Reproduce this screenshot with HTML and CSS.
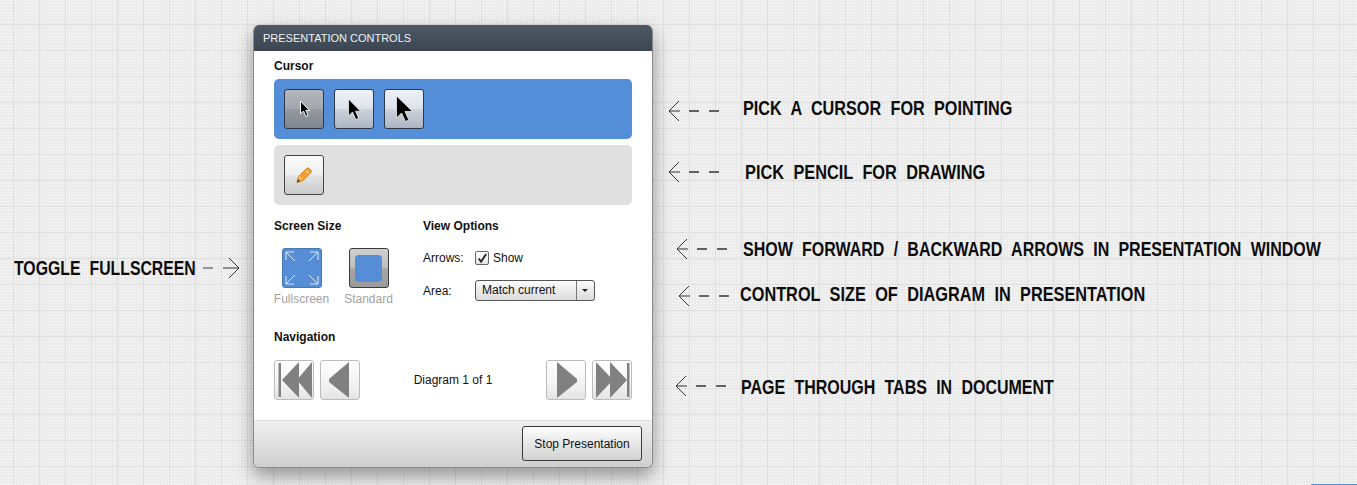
FILE: index.html
```html
<!DOCTYPE html>
<html lang="en">
<head>
<meta charset="utf-8">
<title>Presentation Controls</title>
<link rel="stylesheet" href="styles.css">
</head>
<body>
<div class="stage">
  <section class="panel">
    <header class="panel-title">PRESENTATION CONTROLS</header>
    <div class="panel-body">
      <h2 class="heading heading-cursor">Cursor</h2>
      <div class="tool-bar tool-bar-blue">
        <button class="tool tool-cursor tool-selected"><svg class="cursor-small" width="12" height="18" viewBox="0 0 12 18"><path d="M1.500 1v13l3-3 2.400 5.400 2.200-1-2.300-5H10.500z" fill="#000" stroke="#fff" stroke-width="1"/></svg></button>
        <button class="tool tool-cursor"><svg width="15" height="23" viewBox="0 0 15 23"><path d="M1.500 1v17l4-4 3.300 7.500 2.800-1.300-3.100-7H13.500z" fill="#000" stroke="#fff" stroke-width=".7"/></svg></button>
        <button class="tool tool-cursor"><svg width="19" height="28" viewBox="0 0 19 28"><path d="M1.500 1v22l5-5 4 8.500 3.300-1.500-3.800-8.500H17.500z" fill="#000" stroke="#fff" stroke-width=".7"/></svg></button>
      </div>
      <div class="tool-bar tool-bar-gray">
        <button class="tool tool-pencil"><svg width="18" height="18" viewBox="0 0 18 18"><path d="M3.500 10.500 11.500 2.500a2 2 0 0 1 2.800 0l1.500 1.500a2 2 0 0 1 0 2.800l-8 8-5.800 1.800z" fill="#f0a033" stroke="#c97a1c" stroke-width=".8"/><path d="M11 4.500 13.800 7.300M4 10.500 7 13.500" stroke="#fbd08a" stroke-width="1.300" fill="none"/><path d="M2 16.800 2.800 13l2 2z" fill="#5a3a1a"/></svg></button>
      </div>
      <div class="options">
        <div class="screen-size">
          <h2 class="heading">Screen Size</h2>
          <div class="size-row">
            <div class="size-item">
              <button class="size-btn size-full"><svg width="38" height="38" viewBox="0 0 38 38" fill="none" stroke="#dbe7f7" stroke-width="1"><path d="M3 3 12 12M3 11V3H11M35 3 26 12M27 3H35V11M3 35 12 26M3 27V35H11M35 35 26 26M35 27V35H27"/></svg></button>
              <span class="size-label">Fullscreen</span>
            </div>
            <div class="size-item">
              <button class="size-btn size-std"><span class="std-inner"></span></button>
              <span class="size-label">Standard</span>
            </div>
          </div>
        </div>
        <div class="view-options">
          <h2 class="heading">View Options</h2>
          <div class="opt-row opt-arrows">
            <span class="opt-label">Arrows:</span>
            <span class="checkbox"><svg width="13" height="13" viewBox="0 0 13 13"><path d="M3 6.500 5.500 10 11 1.500" fill="none" stroke="#222" stroke-width="2"/></svg></span>
            <span>Show</span>
          </div>
          <div class="opt-row opt-area">
            <span class="opt-label">Area:</span>
            <div class="select"><span class="select-text">Match current</span><span class="select-arrow"></span></div>
          </div>
        </div>
      </div>
      <h2 class="heading heading-nav">Navigation</h2>
      <div class="nav-row">
        <div class="nav-group">
          <button class="nav-btn"><svg width="38" height="38" viewBox="0 0 38 38" fill="#808080"><path d="M3.500 2h2.500v34H3.500zM24 1v36L7 19zM37 1v36L22 19z"/></svg></button>
          <button class="nav-btn"><svg width="38" height="38" viewBox="0 0 38 38" fill="#808080"><path d="M28 1v36L8 21v-3z"/></svg></button>
        </div>
        <div class="nav-status">Diagram 1 of 1</div>
        <div class="nav-group">
          <button class="nav-btn"><svg width="38" height="38" viewBox="0 0 38 38" fill="#808080"><path d="M10 1v36L30 21v-3z"/></svg></button>
          <button class="nav-btn"><svg width="38" height="38" viewBox="0 0 38 38" fill="#808080"><path d="M34 2h2.500v34H34zM3 1v36L20 19zM17 1v36L34 19z"/></svg></button>
        </div>
      </div>
    </div>
    <footer class="panel-footer"><button class="stop-btn">Stop Presentation</button></footer>
  </section>

  <div class="note note-1">PICK A CURSOR FOR POINTING</div>
  <div class="note note-2">PICK PENCIL FOR DRAWING</div>
  <div class="note note-3">SHOW FORWARD / BACKWARD ARROWS IN PRESENTATION WINDOW</div>
  <div class="note note-4">CONTROL SIZE OF DIAGRAM IN PRESENTATION</div>
  <div class="note note-5">PAGE THROUGH TABS IN DOCUMENT</div>
  <div class="note note-6">TOGGLE FULLSCREEN</div>

  <svg class="pointer pointer-1" width="54" height="22" viewBox="0 0 54 22" fill="none" stroke="#333"><path d="M11 1 1 11l10 10M1 11H12"/><path d="M21 11H31M41 11H51" stroke-width="1.300"/></svg>
  <svg class="pointer pointer-2" width="54" height="22" viewBox="0 0 54 22" fill="none" stroke="#333"><path d="M11 1 1 11l10 10M1 11H12"/><path d="M21 11H31M41 11H51" stroke-width="1.300"/></svg>
  <svg class="pointer pointer-3" width="54" height="22" viewBox="0 0 54 22" fill="none" stroke="#333"><path d="M11 1 1 11l10 10M1 11H12"/><path d="M21 11H31M41 11H51" stroke-width="1.300"/></svg>
  <svg class="pointer pointer-4" width="54" height="22" viewBox="0 0 54 22" fill="none" stroke="#333"><path d="M11 1 1 11l10 10M1 11H12"/><path d="M21 11H31M41 11H51" stroke-width="1.300"/></svg>
  <svg class="pointer pointer-5" width="54" height="22" viewBox="0 0 54 22" fill="none" stroke="#333"><path d="M11 1 1 11l10 10M1 11H12"/><path d="M21 11H31M41 11H51" stroke-width="1.300"/></svg>
  <svg class="pointer pointer-6" width="38" height="22" viewBox="0 0 38 22" fill="none" stroke="#333"><path d="M26 1l10 10-10 10M20 11H36"/><path d="M0 11H10" stroke="#777" stroke-width="1.500"/></svg>
  <div class="corner-strip"></div>
</div>
</body>
</html>
```
FILE: styles.css
```css
* { box-sizing: border-box; }
html, body { margin: 0; padding: 0; }
body { font-family: "Liberation Sans", Arial, sans-serif; font-size: 12px; color: #111; }
.stage {
  position: relative;
  width: 1357px;
  height: 485px;
  overflow: hidden;
  padding: 25px 0 0 253px;
  background-color: #ececec;
  background-image:
    linear-gradient(#dfdfdf 1px, transparent 1px),
    linear-gradient(90deg, #dfdfdf 1px, transparent 1px),
    conic-gradient(from 270deg at 1px 1px, #fafafa 25%, transparent 0);
  background-size: 26px 26px, 26px 26px, 3px 3px;
  background-position: 0 24px, 13px 0, 0 0;
}
.panel {
  width: 400px;
  height: 443px;
  display: flex;
  flex-direction: column;
  background: #fff;
  border: 1px solid #8a8a8a;
  border-top: 0;
  border-radius: 6px;
  overflow: hidden;
  box-shadow: 0 8px 18px rgba(0,0,0,.38);
}
.panel-title {
  height: 26px;
  line-height: 26px;
  padding-left: 9px;
  font-size: 11px;
  color: #eef0f2;
  background: linear-gradient(#4d5865, #3c4653);
  flex: none;
}
.panel-body { flex: 1; padding: 0 20px; }
.heading { margin: 0; font-size: 12px; font-weight: bold; color: #111; line-height: 14px; }
.heading-cursor { margin-top: 8px; margin-bottom: 6px; }
.tool-bar {
  height: 60px;
  border-radius: 5px;
  padding: 10px;
  display: flex;
  gap: 10px;
  margin-bottom: 6px;
}
.tool-bar-blue { background: #548dd8; }
.tool-bar-gray { background: #e0e0e0; }
button { margin: 0; padding: 0; font: inherit; color: inherit; }
.tool {
  width: 40px;
  height: 40px;
  border: 1px solid #2b3a4c;
  border-radius: 3px;
  display: flex;
  align-items: center;
  justify-content: center;
}
.cursor-small { margin-left: 2px; }
.tool-cursor { background: linear-gradient(#eef1f6 0, #dde2ea 50%, #cdd3dd 50%, #aeb5c2 100%); }
.tool-selected { background: linear-gradient(#b4b8bd 0, #a3a7ad 50%, #959aa1 50%, #80858f 100%); }
.tool-pencil { background: linear-gradient(#fbfbfb 0, #eeeeee 50%, #e6e6e6 50%, #c9c9c9 100%); border-color: #444; }
.options { display: flex; margin-top: 14px; height: 108px; }
.screen-size { width: 149px; }
.size-row { display: flex; margin-top: 15px; gap: 12px; }
.size-item { display: flex; flex-direction: column; align-items: center; gap: 4px; width: 55px; }
.size-btn { width: 40px; height: 40px; border-radius: 3px; display: flex; align-items: center; justify-content: center; }
.size-full { background: #558dd6; border: 1px solid #4a78b2; }
.size-std { background: linear-gradient(#cfcfcf 0, #bdbdbd 50%, #a8a8a8 50%, #9a9a9a 100%); border: 1px solid #3c3c3c; }
.std-inner { width: 27px; height: 27px; background: #558dd6; border-radius: 4px; }
.size-label { font-size: 12px; color: #a2a2a2; line-height: 14px; white-space: nowrap; }
.view-options { flex: 1; }
.opt-row { display: flex; align-items: center; }
.opt-arrows { margin-top: 16px; height: 18px; }
.opt-area { margin-top: 13px; height: 21px; }
.opt-label { width: 52px; }
.checkbox {
  width: 14px; height: 14px;
  margin-right: 4px;
  border: 1px solid #666;
  border-radius: 2px;
  background: linear-gradient(#fff, #e4e4e4);
  display: flex; align-items: center; justify-content: center;
}
.select {
  width: 120px; height: 21px;
  border: 1px solid #555;
  border-radius: 3px;
  background: linear-gradient(#fbfbfb, #dcdcdc);
  display: flex;
}
.select-text { flex: 1; line-height: 19px; padding-left: 6px; }
.select-arrow { width: 18px; border-left: 1px solid #777; position: relative; }
.select-arrow::after {
  content: "";
  position: absolute;
  left: 5px; top: 8px;
  border-top: 3px solid #222;
  border-left: 3.500px solid transparent;
  border-right: 3.500px solid transparent;
}
.heading-nav { margin-top: 3px; }
.nav-row { display: flex; justify-content: space-between; align-items: center; margin-top: 16px; }
.nav-group { display: flex; gap: 6px; }
.nav-btn {
  width: 40px; height: 40px;
  border: 1px solid #bcbcbc;
  border-radius: 3px;
  background: linear-gradient(#fff 0, #f4f4f4 55%, #e4e4e4 100%);
  display: flex; align-items: center; justify-content: center;
}
.panel-footer {
  height: 47px;
  flex: none;
  border-top: 1px solid #dcdcdc;
  background: linear-gradient(#efefef, #cfcfcf);
  padding: 5px 10px 0 0;
  display: flex;
  justify-content: flex-end;
  align-items: flex-start;
}
.stop-btn {
  width: 120px; height: 35px;
  border: 1px solid #3a3a3a;
  border-radius: 3px;
  background: linear-gradient(#fdfdfd, #d2d2d2);
}
.note {
  position: absolute;
  white-space: nowrap;
  font-family: "Liberation Sans", Arial, sans-serif;
  font-weight: bold;
  font-size: 20px;
  line-height: 22px;
  color: #0c0c0c;
  word-spacing: 6px;
  transform-origin: left center;
  transform: scaleX(.8);
}
.note-1 { left: 743px; top: 97px; transform: scaleX(.81); }
.note-2 { left: 745px; top: 161px; transform: scaleX(.816); }
.note-3 { left: 743px; top: 238px; }
.note-4 { left: 740px; top: 283px; transform: scaleX(.814); }
.note-5 { left: 741px; top: 376px; }
.note-6 { left: 14px; top: 257px; transform: scaleX(.79); }
.pointer { position: absolute; }
.pointer-1 { left: 668px; top: 100px; }
.pointer-2 { left: 668px; top: 161px; }
.pointer-3 { left: 676px; top: 238px; }
.pointer-4 { left: 678px; top: 285px; }
.pointer-5 { left: 675px; top: 375px; }
.pointer-6 { left: 203px; top: 257px; }
.corner-strip { position: absolute; right: 0; bottom: 0; width: 46px; height: 1px; background: #3b95e8; }
```
